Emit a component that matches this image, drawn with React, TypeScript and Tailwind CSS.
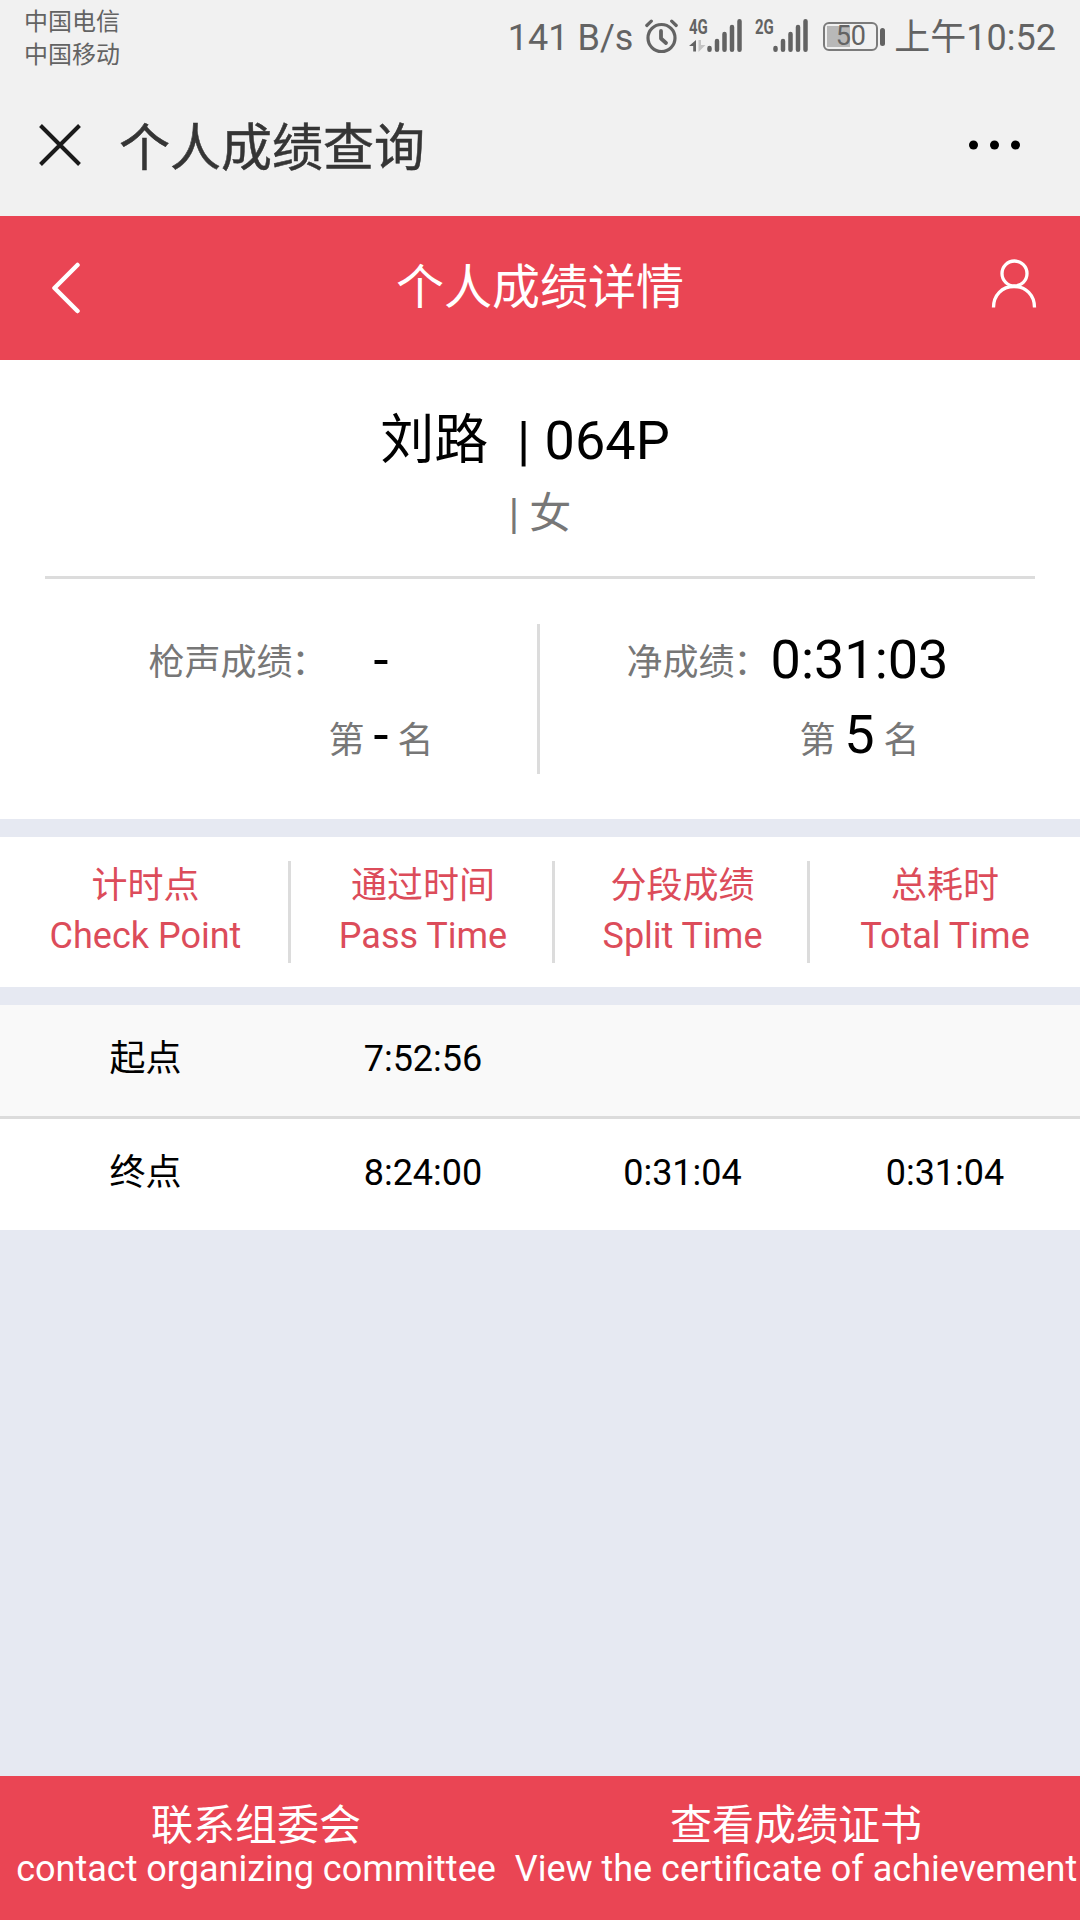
import React from "react";

const COLUMNS = [
  { zh: "计时点", en: "Check Point", width: "w-[291px]" },
  { zh: "通过时间", en: "Pass Time", width: "w-[264px]" },
  { zh: "分段成绩", en: "Split Time", width: "w-[255px]" },
  { zh: "总耗时", en: "Total Time", width: "w-[270px]" },
];

const ROWS = [
  ["起点", "7:52:56", "", ""],
  ["终点", "8:24:00", "0:31:04", "0:31:04"],
];

const App = () => {
  return (
    <div className="flex flex-col w-[1080px] h-[1920px] overflow-hidden bg-[#e6e9f2] text-black font-['Roboto','Noto_Sans_CJK_SC',sans-serif]">
      <header className="h-[216px] bg-[#f1f1f1]">
        <StatusBar />
        <div className="flex items-center h-[144px] pt-[2px] pl-[39px] pr-[60px]">
          <svg width="42" height="42" viewBox="0 0 42 42" fill="none" stroke="#1a1a1a" strokeWidth="4">
            <path d="M1.5 1.5l39 39M40.5 1.5l-39 39" />
          </svg>
          <h1 className="ml-[38px] pt-2 text-[51px] leading-[60px] font-normal text-[#353535] [-webkit-text-stroke:0.5px_#353535]">个人成绩查询</h1>
          <svg className="ml-auto" width="51" height="10" viewBox="0 0 51 10">
            <circle cx="4.5" cy="5" r="4.5" />
            <circle cx="25.5" cy="5" r="4.5" />
            <circle cx="46.5" cy="5" r="4.5" />
          </svg>
        </div>
      </header>

      <nav className="flex items-center h-[144px] bg-[#ea4554] text-white pl-[50px] pr-[43px]">
        <svg width="50" height="52" viewBox="0 0 50 52" fill="none" stroke="currentColor" strokeWidth="4.500" strokeLinecap="round" strokeLinejoin="round">
          <path d="M27.5 3L4.500 26L27.500 49" />
        </svg>
        <h2 className="ml-[296px] text-[48px] leading-[56px]">个人成绩详情</h2>
        <svg className="-mt-2 ml-auto" width="46" height="50" viewBox="0 0 46 50" fill="none" stroke="currentColor" strokeWidth="3.3">
          <circle cx="23.500" cy="14.500" r="12.500" />
          <path d="M2.500 48.500C2.500 36 11 27.500 23 27.500S43.500 36 43.500 48.500" />
        </svg>
      </nav>

      <section className="h-[459px] bg-white px-[45px]">
        <div className="flex flex-col items-center h-[219px] border-b-[3px] border-[#dcdcdc] pt-[43px]">
          <p className="text-[54px] leading-[76px] mr-[30px] whitespace-pre [word-spacing:1px]">刘路  | 064P</p>
          <p className="text-[42px] leading-[59px] text-[#777] whitespace-pre mt-[5px]">| 女</p>
        </div>
        <div className="flex mt-[45px] h-[150px]">
          <Score label="枪声成绩" time="-" rank="-" className="w-[492px]" />
          <div className="w-[3px] bg-[#dcdcdc]"></div>
          <Score label="净成绩" time="0:31:03" rank="5" className="w-[495px]" />
        </div>
      </section>

      <section className="flex mt-[18px] h-[150px] bg-white py-6 text-[36px] leading-[51px] text-[#dc4c5a] text-center">
        {COLUMNS.map((col) => (
          <div key={col.en} className={`${col.width} h-[102px] border-r-[3px] border-[#dcdcdc] pl-[3px] last:border-r-0 last:pl-0`}>
            <p>{col.zh}</p>
            <p className="-mt-px">{col.en}</p>
          </div>
        ))}
      </section>

      <ul className="mt-[18px] text-[36px] leading-[108px] text-center">
        {ROWS.map((row) => (
          <li key={row[0]} className="flex h-[111px] bg-white first:h-[114px] first:bg-[#f9f9f9] first:border-b-[3px] border-[#dcdcdc]">
            {row.map((cell, i) => (
              <span key={i} className={COLUMNS[i].width}>{cell}</span>
            ))}
          </li>
        ))}
      </ul>

      <footer className="flex mt-auto h-[144px] bg-[#ea4554] text-white text-center whitespace-nowrap pt-5">
        <FooterLink zh="联系组委会" en="contact organizing committee" className="w-[512px]" />
        <FooterLink zh="查看成绩证书" en="View the certificate of achievement" className="w-[568px]" />
      </footer>
    </div>
  );
};

export default App;

const StatusBar = () => (
  <div className="flex h-[72px] pl-6 pr-6 text-[#636363]">
    <div className="text-[24px] leading-[33px] pt-[6px]">
      <p>中国电信</p>
      <p>中国移动</p>
    </div>
    <div className="flex ml-auto text-[36px] leading-[76px]">
      <span className="mr-[12px]">141 B/s</span>
      <svg className="mt-[19px] mr-[11px]" width="33" height="35" viewBox="0 0 33 35" fill="none" stroke="currentColor" strokeWidth="3.200" strokeLinecap="round">
        <circle cx="16.500" cy="19" r="13.500" />
        <path d="M16 12v7.500l5 4.500" strokeWidth="3.800" strokeLinejoin="round" />
        <path d="M1.800 6.500l4.500-4.300M31.200 6.500l-4.500-4.300" />
      </svg>
      <div className="relative w-[53px] mr-[13px]">
        <NetLabel text="4G" />
        <svg className="absolute left-0 top-[40px]" width="17" height="13" viewBox="0 0 17 13">
          <path d="M7 0v11.500H4.200V6H0z" fill="currentColor" />
          <path d="M9.500 0h2.500v5h4.500L9.500 12z" fill="#c4c4c4" />
        </svg>
        <SignalBars />
      </div>
      <div className="relative w-[53px] mr-[15px]">
        <NetLabel text="2G" />
        <SignalBars />
      </div>
      <div className="relative flex items-center justify-center w-[55px] h-[29px] mt-[22px] border-2 border-[#7b7b7b] rounded-md">
        <span className="absolute left-[2px] top-[2px] w-[23px] h-[21px] bg-[#b8b8b8]"></span>
        <span className="relative text-[27px] leading-[27px]">50</span>
      </div>
      <span className="w-[5px] h-[18px] mt-[28px] ml-[2px] mr-[9px] rounded-full bg-current"></span>
      <span>上午10:52</span>
    </div>
  </div>
);

const NetLabel = ({ text }: { text: string }) => (
  <span className="absolute left-0 top-[17px] text-[20px] leading-5 font-bold origin-left scale-x-75">{text}</span>
);

const SignalBars = () => (
  <svg className="absolute right-0 top-[19px]" width="35" height="33" viewBox="0 0 35 33" stroke="currentColor" strokeWidth="4.500" strokeLinecap="round">
    <path d="M2.500 29v1.700M10 22v8.700M17.500 15v15.700M25 8v22.700M32.500 2.300v28.400" />
  </svg>
);

const Score = (props: { label: string; time: string; rank: string; className: string }) => {
  const { label, time, rank, className } = props;

  return (
    <div className={`${className} flex justify-center text-[36px] text-[#777]`}>
      <p className="leading-[78px]">
        {label}
        <span className="-ml-px mr-px">：</span>
      </p>
      <div className="text-center leading-[75px] -mt-[2px]">
        <p className="text-[54px] text-black">{time}</p>
        <p>
          第 <span className="text-[54px] text-black">{rank}</span> 名
        </p>
      </div>
    </div>
  );
};

const FooterLink = (props: { zh: string; en: string; className: string }) => (
  <div className={props.className}>
    <p className="text-[42px] leading-[59px]">{props.zh}</p>
    <p className="text-[36px] leading-[32px] -mt-[2px]">{props.en}</p>
  </div>
);
